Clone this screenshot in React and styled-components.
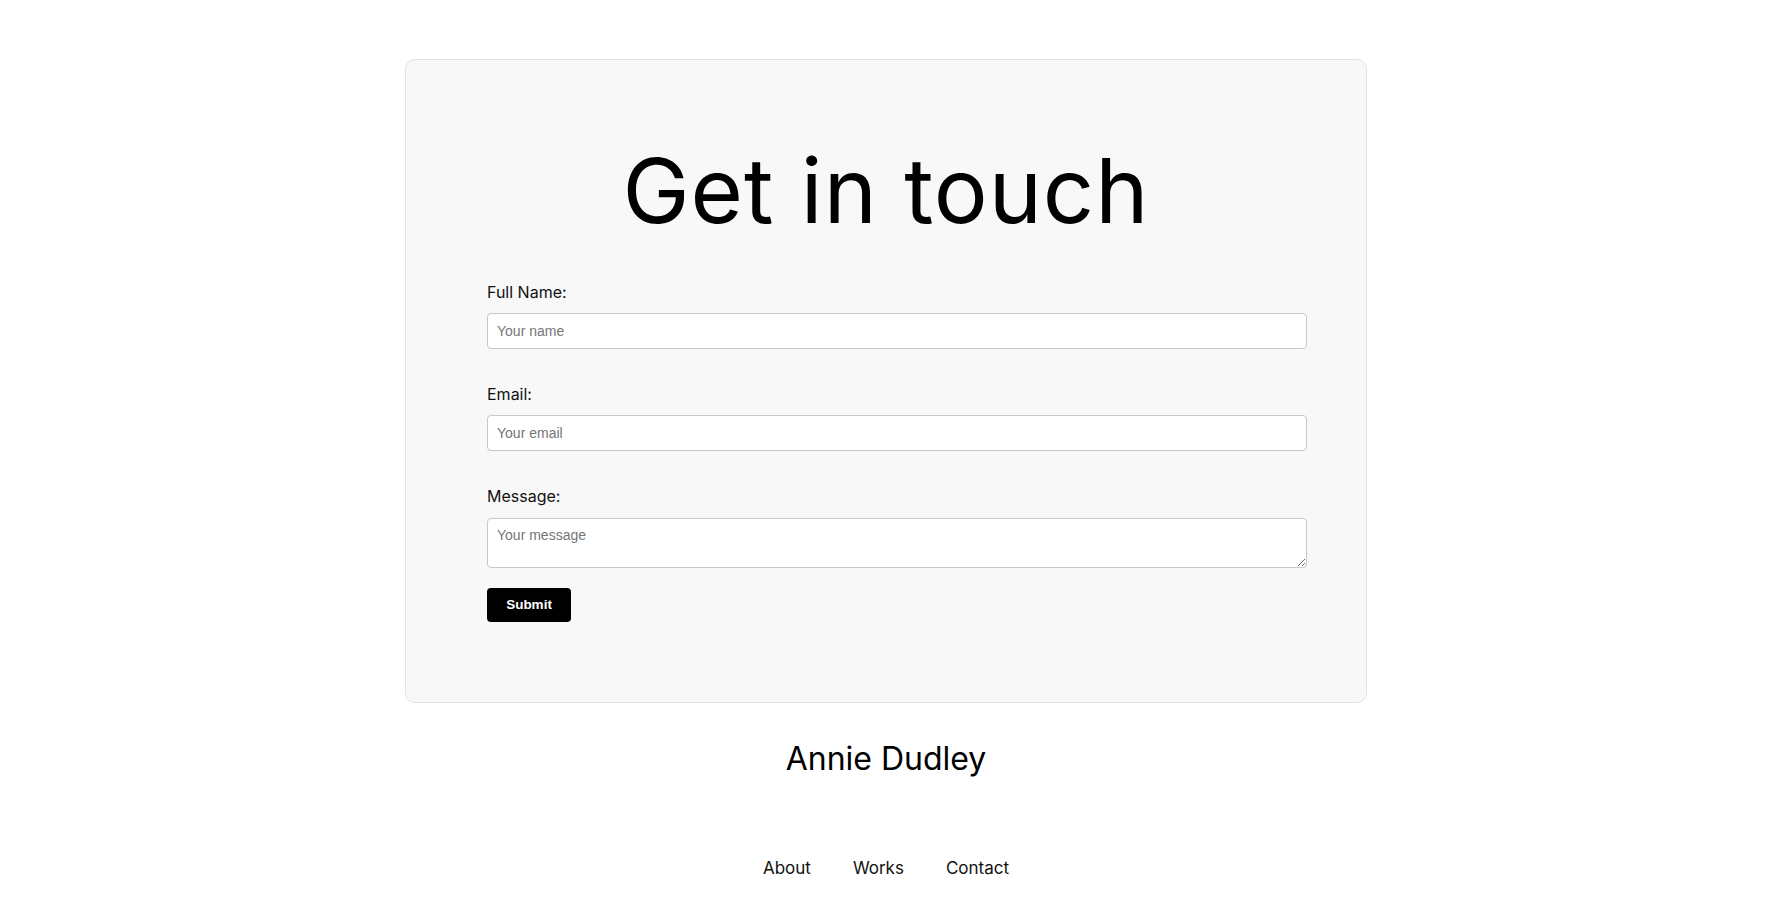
import React from 'react';
import styled, { createGlobalStyle } from 'styled-components';

const GlobalStyle = createGlobalStyle`
  * {
    box-sizing: border-box;
  }
  body {
    margin: 0;
    background: #ffffff;
    color: #000000;
    font-family: Inter, "Liberation Sans", sans-serif;
  }
`;

const Page = styled.div`
  padding: 59px 8px 0 0;
  display: flex;
  flex-direction: column;
  align-items: center;
`;

const Card = styled.section`
  width: 962px;
  padding: 77px 59px 80px 81px;
  background: #f8f8f8;
  border: 1px solid #e2e2e2;
  border-radius: 10px;
`;

const Title = styled.h1`
  margin: 0 11px 38px -11px;
  font-size: 90px;
  font-weight: 400;
  line-height: 1.2;
  text-align: center;
  letter-spacing: 1px;
`;

const Form = styled.form`
  display: flex;
  flex-direction: column;
`;

const Field = styled.div`
  display: flex;
  flex-direction: column;
  gap: 11px;
  margin-bottom: ${(p) => (p.$last ? '20px' : '36px')};
`;

const Label = styled.label`
  font-size: 16px;
  line-height: 1.2;
  color: #111;
`;

const Input = styled.input`
  width: 100%;
  height: 36px;
  padding: 0 9px;
  background: #fff;
  border: 1px solid #c8c8c8;
  border-radius: 4px;
  font-family: "Liberation Sans", Arial, sans-serif;
  font-size: 14px;
  color: #000;
  &::placeholder {
    color: #767676;
  }
`;

const TextArea = styled.textarea`
  width: 100%;
  height: 50px;
  padding: 8px 9px;
  background: #fff;
  border: 1px solid #c8c8c8;
  border-radius: 4px;
  font-family: "Liberation Sans", Arial, sans-serif;
  font-size: 14px;
  &::placeholder {
    color: #767676;
  }
`;

const Submit = styled.button`
  align-self: flex-start;
  width: 84px;
  height: 34px;
  padding: 0;
  background: #000;
  color: #fff;
  border: none;
  border-radius: 4px;
  font-family: "Liberation Sans", Arial, sans-serif;
  font-weight: 700;
  font-size: 13.5px;
  cursor: pointer;
`;

const Footer = styled.footer`
  display: flex;
  flex-direction: column;
  align-items: center;
  padding-top: 37px;
`;

const Name = styled.h2`
  margin: 0 0 80px;
  font-size: 32px;
  font-weight: 400;
  line-height: 1.2;
`;

const Nav = styled.nav`
  display: flex;
  gap: 42px;
`;

const NavLink = styled.a`
  font-size: 17px;
  line-height: 1.2;
  color: #111;
  text-decoration: none;
`;

export default function App() {
  return (
    <>
      <GlobalStyle />
      <Page>
        <Card>
          <Title>Get in touch</Title>
          <Form onSubmit={(e) => e.preventDefault()}>
            <Field>
              <Label htmlFor="name">Full Name:</Label>
              <Input id="name" type="text" placeholder="Your name" />
            </Field>
            <Field>
              <Label htmlFor="email">Email:</Label>
              <Input id="email" type="email" placeholder="Your email" />
            </Field>
            <Field $last>
              <Label htmlFor="message">Message:</Label>
              <TextArea id="message" placeholder="Your message" />
            </Field>
            <Submit type="submit">Submit</Submit>
          </Form>
        </Card>
        <Footer>
          <Name>Annie Dudley</Name>
          <Nav>
            <NavLink href="#about">About</NavLink>
            <NavLink href="#works">Works</NavLink>
            <NavLink href="#contact">Contact</NavLink>
          </Nav>
        </Footer>
      </Page>
    </>
  );
}
